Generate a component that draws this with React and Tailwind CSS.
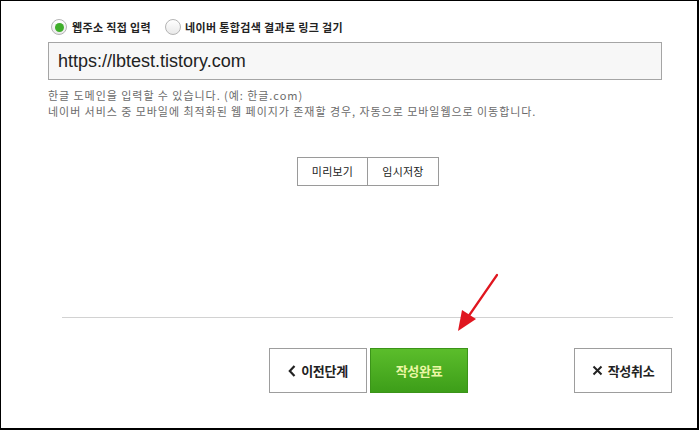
import React from "react";

const kr = "font-['Noto_Sans_CJK_KR','Noto_Sans',sans-serif]";

function Radio({ checked }) {
  return (
    <span className="w-[16px] h-[16px] rounded-full border border-[#b4b4b4] bg-gradient-to-b from-[#ffffff] to-[#e9e9e9] flex items-center justify-center shrink-0">
      {checked && <span className="w-[9px] h-[9px] rounded-full bg-[#3fae2a]" />}
    </span>
  );
}

export default function App() {
  return (
    <div className={`relative w-[699px] h-[430px] bg-white border-l border-t border-r-2 border-b-2 border-black ${kr}`}>
      <div className="flex flex-col pl-[47px] pr-[35px]">
        {/* radio row */}
        <div className="mt-[18px] h-[16px] flex items-center text-[11px] font-bold text-[#222] tracking-[0.35px]">
          <div className="ml-[3px]"><Radio checked /></div>
          <span className="ml-[5px] leading-none">웹주소 직접 입력</span>
          <div className="ml-[14px]"><Radio /></div>
          <span className="ml-[4px] leading-none">네이버 통합검색 결과로 링크 걸기</span>
        </div>

        {/* url input */}
        <div className="mt-[7px] w-[614px] h-[38px] border border-[#a5a5a5] bg-[#f7f7f7] flex items-center pl-[9px]">
          <span className="font-['Liberation_Sans',Arial,sans-serif] text-[18px] text-[#222] leading-none">https://lbtest.tistory.com</span>
        </div>

        {/* help */}
        <div className="mt-[7px] text-[11px] leading-[16px] text-[#6b6b6b] tracking-[0.95px]">
          <p>한글 도메인을 입력할 수 있습니다. (예: 한글.com)</p>
          <p>네이버 서비스 중 모바일에 최적화된 웹 페이지가 존재할 경우, 자동으로 모바일웹으로 이동합니다.</p>
        </div>

        {/* preview / temp save */}
        <div className="mt-[38px] ml-[249px] flex text-[11px] text-[#222] tracking-[0.2px]">
          <button className="w-[71px] h-[29px] border border-[#9a9a9a] bg-white">미리보기</button>
          <button className="w-[71px] h-[29px] border border-l-0 border-[#9a9a9a] bg-white">임시저장</button>
        </div>
      </div>

      {/* separator */}
      <div className="mt-[131px] ml-[61px] w-[611px] h-px bg-[#d2d2d2]" />

      {/* bottom buttons */}
      <div className="mt-[30px] flex pl-[268px] text-[13px] font-bold tracking-[-0.3px]">
        <button className="w-[98px] h-[45px] border border-[#9d9d9d] bg-white text-[#222] flex items-center justify-center gap-[5px]">
          <svg width="8" height="12" viewBox="0 0 8 12">
            <path d="M6.5 1 L1.8 6 L6.5 11" fill="none" stroke="#222" strokeWidth="2.2" />
          </svg>
          <span>이전단계</span>
        </button>
        <button className="ml-[3px] w-[98px] h-[45px] border border-[#3b9419] bg-gradient-to-b from-[#5bbd2b] to-[#3d9e19] text-[#ecf7a6] flex items-center justify-center">
          작성완료
        </button>
        <button className="ml-[106px] w-[98px] h-[45px] border border-[#9d9d9d] bg-white text-[#222] flex items-center justify-center gap-[5px]">
          <svg width="11" height="11" viewBox="0 0 11 11">
            <path d="M1.5 1.5 L9.5 9.5 M9.5 1.5 L1.5 9.5" fill="none" stroke="#222" strokeWidth="2" />
          </svg>
          <span>작성취소</span>
        </button>
      </div>

      {/* red annotation arrow */}
      <svg className="absolute left-[448px] top-[268px]" width="56" height="68" viewBox="0 0 56 68">
        <line x1="48" y1="6" x2="19" y2="48" stroke="#e0161f" strokeWidth="2.2" strokeLinecap="round" />
        <polygon points="9,62 13,41 27,50" fill="#e0161f" />
      </svg>
    </div>
  );
}
